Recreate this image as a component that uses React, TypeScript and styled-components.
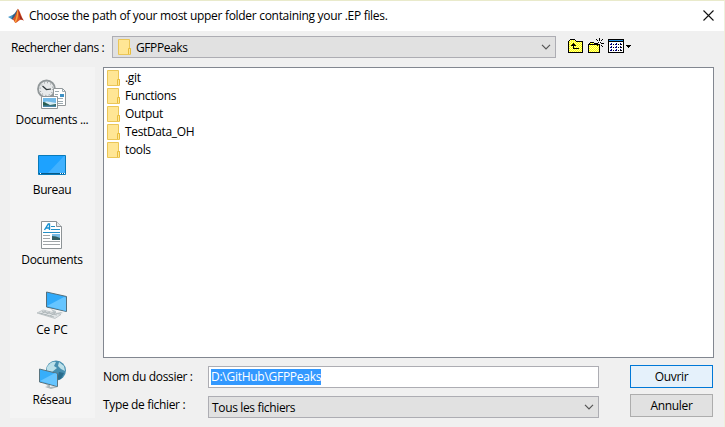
import React from "react";
import styled, { createGlobalStyle } from "styled-components";

const Global = createGlobalStyle`
  * { box-sizing: border-box; }
  html, body { margin: 0; padding: 0; overflow: hidden; }
  body { font: 12px/16px "Open Sans", "Noto Sans", sans-serif; color: #000; background: #f0f0f0; }
  svg { display: block; flex: none; }
`;

const Window = styled.div`
  width: 725px;
  height: 427px;
  display: flex;
  flex-direction: column;
  background: #f0f0f0;
  border-top: 1px solid #e9eacb;
  border-right: 1px solid #eff0dc;
`;

const TitleBar = styled.header`
  height: 30px;
  display: flex;
  align-items: center;
  padding: 0 10px 1px 8px;
  background: #fff;
`;

const Text = styled.span<{ $track?: number }>`
  white-space: nowrap;
  letter-spacing: ${(p) => p.$track ?? -0.35}px;
`;

const Title = styled(Text)`
  flex: 1;
  margin: 1px 0 0 5px;
`;

const LookInBar = styled.div`
  height: 36px;
  display: flex;
  align-items: flex-start;
  padding: 5px 0 0 11px;
`;

const LookInLabel = styled(Text)`
  width: 101px;
  margin-top: 4px;
`;

const Combo = styled.div<{ $width: number; $pad: number }>`
  width: ${(p) => p.$width}px;
  height: 22px;
  display: flex;
  align-items: center;
  justify-content: space-between;
  padding: 0 4px 0 ${(p) => p.$pad}px;
  background: #e1e1e1;
  border: 1px solid #adadb3;
`;

const ComboValue = styled.div`
  display: flex;
  align-items: center;
  gap: 5px;
`;

const ComboText = styled(Text)`
  padding-top: 1px;
`;

const Tools = styled.div`
  display: flex;
  gap: 4px;
  margin: 2px 0 0 12px;
`;

const Body = styled.div`
  display: flex;
  gap: 8px;
  padding-left: 10px;
`;

const Places = styled.nav`
  width: 85px;
  height: 351px;
  display: flex;
  flex-direction: column;
  background: #f4f4f4;
`;

const Place = styled.div`
  height: 70px;
  padding: 12px 1px 0 0;
  display: flex;
  flex-direction: column;
  align-items: center;
  gap: 1px;
`;

const Main = styled.main`
  width: 611px;
  display: flex;
  flex-direction: column;
`;

const FileList = styled.div`
  height: 291px;
  padding: 1px 0 0 3px;
  background: #fff;
  border: 1px solid #828790;
`;

const FileRow = styled.div`
  height: 18px;
  display: flex;
  align-items: center;
  gap: 5px;
`;

const Form = styled.div`
  display: flex;
  justify-content: space-between;
  padding-top: 7px;
`;

const Fields = styled.div`
  display: grid;
  grid-template-columns: 105px 391px;
  row-gap: 8px;
  padding-top: 1px;
`;

const FieldLabel = styled(Text)<{ $top: number }>`
  padding-top: ${(p) => p.$top}px;
`;

const Input = styled.div`
  height: 22px;
  display: flex;
  align-items: center;
  padding-left: 2px;
  background: #fff;
  border: 1px solid #adadb3;
`;

const Selection = styled(Text)`
  height: 16px;
  background: #3399ff;
  color: #fff;
`;

const Buttons = styled.div`
  display: flex;
  flex-direction: column;
  gap: 6px;
  margin-right: 1px;
`;

const Button = styled.button<{ $primary?: boolean }>`
  width: 83px;
  height: 23px;
  padding: 0;
  font: inherit;
  color: #000;
  background: ${(p) => (p.$primary ? "#e5f1fb" : "#e1e1e1")};
  border: 1px solid ${(p) => (p.$primary ? "#0078d7" : "#adadad")};
`;

const Chevron = () => (
  <svg width="10" height="6" viewBox="0 0 10 6">
    <path d="M1 .8 5 4.8 9 .8" fill="none" stroke="#555" strokeWidth="1.2" />
  </svg>
);

const Folder = () => (
  <svg width="13" height="16" viewBox="0 0 13 16">
    <path d="M.5.5h11v9h1v6H.5z" fill="#ffe695" stroke="#ebc657" />
    <path d="M10.5 15v-5.5h2V15" fill="#ffe695" stroke="#e8bd3d" />
  </svg>
);

const MatlabLogo = () => (
  <svg width="16" height="16" viewBox="0 0 16 16">
    <path d="M0 9 5 6.8 7.2 9 4.3 11.5z" fill="#4b9bcc" />
    <path d="M5 6.8C7 6 8 3 9.8.8L8.5 7 4.8 11.5 3.5 11z" fill="#315f83" />
    <path d="M9.8.8C8.3 4 8 8 4.3 11.5c1.6-.2 2 3 3.3 3.6C10.3 14 11 10 15.8 12.5 13.5 9.5 12 2 9.8.8z" fill="#dc5526" />
    <path d="M9.6 1C9 5 8.8 9 6.7 13.5l1 1.2C9.9 11.3 10.7 6 9.6 1z" fill="#f6a63d" />
    <path d="M10.2 1.3c1.2 2.5 2.2 7.5 5.6 11.2L12 10.7z" fill="#982b20" />
  </svg>
);

const CloseIcon = () => (
  <svg width="11" height="11" viewBox="0 0 11 11">
    <path d="m.5.5 10 10m0-10-10 10" stroke="#111" strokeWidth="1.1" />
  </svg>
);

const Dither = ({ id }: { id: string }) => (
  <defs>
    <pattern id={id} width="2" height="2" patternUnits="userSpaceOnUse">
      <path d="M0 0h2v2H0z" fill="#ff0" />
      <path d="M0 0h1v1H0zM1 1h1v1H1z" fill="#ffff9c" />
    </pattern>
  </defs>
);

const UpFolder = () => (
  <svg width="16" height="16" viewBox="0 0 16 16" shapeRendering="crispEdges">
    <Dither id="up-dither" />
    <path d="M0 3h1V2h1V1h5v1h1v1h7v12H0z" fill="#000" />
    <path d="M1 4h13v10H1zM2 2h5v1H2z" fill="url(#up-dither)" />
    <path d="M1 3h7v1H1z" fill="#ffff50" />
    <path d="M5 5h1v1h1v1h1v1H6v2h5v1H5V8H3V7h1V6h1z" fill="#000" />
  </svg>
);

const NewFolder = () => (
  <svg width="16" height="16" viewBox="0 0 16 16" shapeRendering="crispEdges">
    <Dither id="new-dither" />
    <path d="M0 6h1V5h1V4h4v1h1v1h5v9H0z" fill="#000" />
    <path d="M1 7h10v7H1zM2 5h4v1H2z" fill="url(#new-dither)" />
    <path d="M11 0h1v3h-1zM8 1h1v1H8zM9 2h1v1H9zM14 1h1v1h-1zM13 2h1v1h-1zM7 5h3v1H7zM13 5h3v1h-3zM11 7h1v2h-1zM13 7h1v1h-1zM14 8h1v1h-1zM9 7h1v1H9zM10 4h1v1h-1zM12 4h1v1h-1z" fill="#000" />
    <path d="M11 4h1v2h-1z" fill="#fff" />
  </svg>
);

const ViewMenu = () => (
  <svg width="23" height="16" viewBox="0 0 23 16" shapeRendering="crispEdges">
    <path d="M0 1h16v14H0z" fill="#000" />
    <path d="M1 4h14v10H1z" fill="#fff" />
    <path d="M1 2h14v1H1z" fill="#2492e8" />
    {[5, 8, 11].map((y) => (
      <React.Fragment key={y}>
        <path d={`M3 ${y}h1v1H3zM2 ${y + 1}h2v1H2zM8 ${y}h1v1H8zM7 ${y + 1}h2v1H7zM12 ${y}h1v1h-1z`} fill="#000080" />
        <path d={`M5 ${y + 1}h1v1H5zM10 ${y + 1}h1v1h-1zM12 ${y + 1}h2v1h-2z`} fill="#000" />
      </React.Fragment>
    ))}
    <path d="M18 7h5v1h-5zM19 8h3v1h-3zM20 9h1v1h-1z" fill="#000" />
  </svg>
);

const RecentIcon = () => (
  <svg width="32" height="32" viewBox="0 0 32 32">
    <circle cx="10.500" cy="10" r="8.500" fill="#e7e9ea" stroke="#919799" strokeWidth="1.8" />
    <circle cx="10.500" cy="10" r="6.4" fill="none" stroke="#6b7478" strokeDasharray=".8 2.55" />
    <path d="m6.500 7 4 3.500 4.500-.5" fill="none" stroke="#30383b" strokeWidth="1.2" />
    <path d="M17.500 9.500h9l3 3v14h-12z" fill="#fff" stroke="#929799" />
    <path d="M26.500 9.500v3h3M19 12.500h4M19 15.500h3M19 19.500h8M19 22.500h8M19 24.500h8" fill="none" stroke="#9caab0" />
    <path d="M24 15h4v3h-4z" fill="#3d91c5" />
    <path d="M5.500 17.500h16v12h-16z" fill="#fff" stroke="#929799" />
    <path d="M7 19h13v9H7z" fill="#73bae8" />
    <path d="M7 24c4-3 6-1 13 0v2H7z" fill="#d8edf5" />
    <path d="M7 23c3 0 4 2 7 3l6-1v2H7z" fill="#285d51" />
    <path d="M7 26.500h13V28H7z" fill="#4b87aa" />
  </svg>
);

const DesktopIcon = () => (
  <svg width="32" height="32" viewBox="0 0 32 32">
    <path d="M2.500 6.500h27v19h-27z" fill="#1da2ff" stroke="#087aba" />
    <path d="M12 24 28 7h1v17z" fill="#40b1ff" />
    <path d="M3 24h26v1H3z" fill="#075985" />
    <path d="M4 24h1v1H4zM24 24h1v1h-1zM26 24h1v1h-1zM28 24h1v1h-1z" fill="#fff" />
  </svg>
);

const DocumentIcon = () => (
  <svg width="32" height="32" viewBox="0 0 32 32">
    <path d="M5.500 2.500h15l5 5v22h-20z" fill="#fff" stroke="#8d9396" />
    <path d="M20.500 2.500v5h5" fill="#e6e8e9" stroke="#8d9396" />
    <path d="m8.500 11 3.800-6h1.200v6M10 9h4" fill="none" stroke="#168fd0" strokeWidth="1.400" />
    <path d="M15 7.500h4M15 10.500h9M7 13.500h17" stroke="#238fc5" />
    <path d="M7 16.500h7M7 19.500h7M7 22.500h17M7 25.500h17" stroke="#a0a5a8" />
    <path d="M16 15h8v6h-8z" fill="#78bce5" />
    <path d="M16 17q4 0 8 2v2h-8z" fill="#315f63" />
  </svg>
);

const PcIcon = () => (
  <svg width="32" height="32" viewBox="0 0 32 32">
    <path d="m15 20 5 2v2l5-1 2 1-8 2-5-2 3-1z" fill="#bfc7ca" />
    <path d="m10.500 3 20 4.500v15L10.500 18z" fill="#30aafa" stroke="#536f7c" />
    <path d="m11 17 17-9 2 .5V22z" fill="#66c5ff" />
    <path d="m1 24 6-3 18 4.500-6 4z" fill="#e0e4e6" stroke="#a6aeb1" strokeWidth=".6" />
    <path d="m3 24 15 4M6 22.500 21 26M5 25l5-3m-1 4 5-3m0 4 5-3" stroke="#a6aeb1" strokeWidth=".8" />
  </svg>
);

const NetworkIcon = () => (
  <svg width="32" height="32" viewBox="0 0 32 32">
    <circle cx="20" cy="11.500" r="10" fill="#468eaf" />
    <path d="M11 8q4-6 9-5l-2 4 3 2-5 4-5-1zM23 3l5 4 1 5-4-2-3-3z" fill="#bce0e9" />
    <path d="m23 13 5 1-3 6-4 1z" fill="#2a6c8c" />
    <path d="m9 25 5 1v2l6-1 2 1-7 2-6-2 3-1z" fill="#aeb8bb" />
    <path d="m3.500 10 18 4.500v13L3.500 23z" fill="#37aefa" stroke="#59747f" />
    <path d="m4 22 15-8 2 1v12z" fill="#66c5ff" />
  </svg>
);

const places = [
  { name: "Documents ...", icon: <RecentIcon />, track: -0.3 },
  { name: "Bureau", icon: <DesktopIcon />, track: -0.4 },
  { name: "Documents", icon: <DocumentIcon />, track: -0.3 },
  { name: "Ce PC", icon: <PcIcon />, track: -0.1 },
  { name: "Réseau", icon: <NetworkIcon />, track: -0.3 },
];

const folders = [".git", "Functions", "Output", "TestData_OH", "tools"];

export default function App() {
  return (
    <>
      <Global />
      <Window>
        <TitleBar>
          <MatlabLogo />
          <Title $track={-0.3}>Choose the path of your most upper folder containing your .EP files.</Title>
          <CloseIcon />
        </TitleBar>
        <LookInBar>
          <LookInLabel $track={-0.4}>Rechercher dans :</LookInLabel>
          <Combo $width={444} $pad={5}>
            <ComboValue><Folder /><ComboText $track={-0.4}>GFPPeaks</ComboText></ComboValue>
            <Chevron />
          </Combo>
          <Tools><UpFolder /><NewFolder /><ViewMenu /></Tools>
        </LookInBar>
        <Body>
          <Places>
            {places.map((p) => (
              <Place key={p.name}>{p.icon}<Text $track={p.track}>{p.name}</Text></Place>
            ))}
          </Places>
          <Main>
            <FileList>
              {folders.map((name) => (
                <FileRow key={name}><Folder /><Text>{name}</Text></FileRow>
              ))}
            </FileList>
            <Form>
              <Fields>
                <FieldLabel $top={3}>Nom du dossier :</FieldLabel>
                <Input><Selection $track={-0.27}>D:\GitHub\GFPPeaks</Selection></Input>
                <FieldLabel $top={1}>Type de fichier :</FieldLabel>
                <Combo $width={391} $pad={3}><ComboText>Tous les fichiers</ComboText><Chevron /></Combo>
              </Fields>
              <Buttons>
                <Button $primary><Text>Ouvrir</Text></Button>
                <Button><Text>Annuler</Text></Button>
              </Buttons>
            </Form>
          </Main>
        </Body>
      </Window>
    </>
  );
}
